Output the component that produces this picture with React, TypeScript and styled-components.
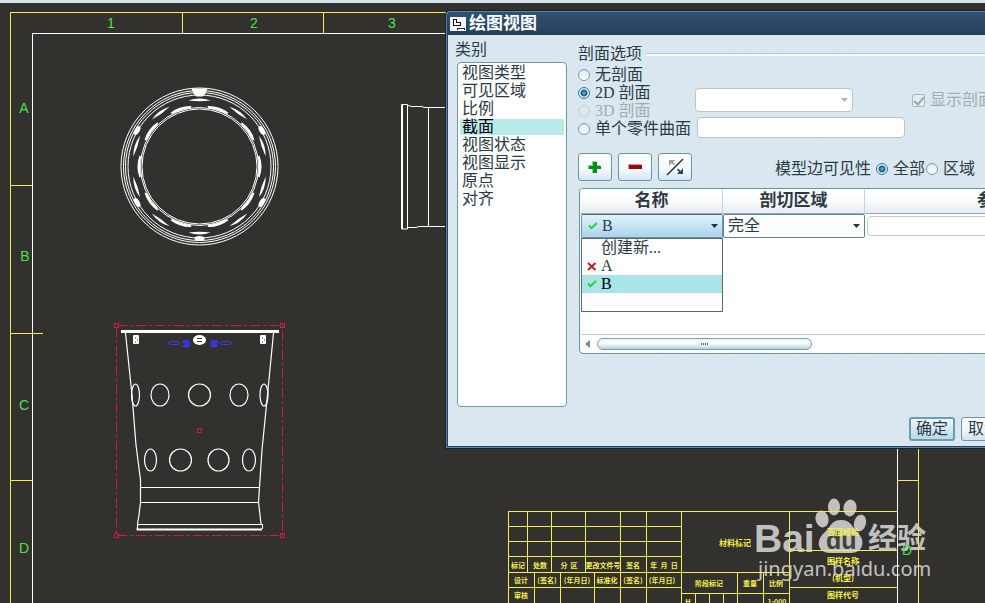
import React from "react";
import styled, { createGlobalStyle, css } from "styled-components";

const GlobalStyle = createGlobalStyle`
  * { box-sizing: border-box; }
  body {
    margin: 0;
    background: #33312d;
    overflow: hidden;
    color: #2c3a44;
    font-family: "Liberation Serif", "Noto Sans CJK SC", serif;
    font-size: 16px;
    line-height: 18px;
  }
  button, input, select { font: inherit; color: inherit; margin: 0; }
`;

/* ---------- Desktop ---------- */

const Desktop = styled.div`
  position: relative;
  min-height: 100vh;
  overflow: hidden;
  background: #33312d;
`;

const TopStrip = styled.div`
  height: 3px;
  background: #d5e2ea;
`;

const Sheet = styled.svg`
  position: absolute;
  inset: 0;
  width: 100%;
  height: 100%;
  fill: none;
`;

const ZoneText = styled.text`
  fill: #4be04b;
  font: 14px "Liberation Sans Narrow", "Liberation Sans", sans-serif;
  text-anchor: middle;
`;

const BlockText = styled.text<{ $size?: number }>`
  fill: #f6f04a;
  font: bold ${(p) => p.$size ?? 7}px "Noto Sans CJK SC", sans-serif;
  text-anchor: middle;
  white-space: pre;
`;

const Watermark = styled.svg`
  position: absolute;
  inset: 0;
  width: 100%;
  height: 100%;
  fill: #e4e4e4;
  opacity: 0.8;
  pointer-events: none;
`;

const Brand = styled.text`
  font: bold 39px "Liberation Sans", sans-serif;
`;
const BrandCjk = styled.text`
  font: bold 29px "Noto Sans CJK SC", sans-serif;
`;
const BrandInner = styled.text`
  font: bold 25px "Liberation Sans", sans-serif;
  fill: #45443f;
`;
const BrandUrl = styled.text`
  font: 20px "Noto Sans", sans-serif;
`;

/* ---------- Dialog ---------- */

const Dialog = styled.section`
  position: absolute;
  top: 10px;
  left: 445px;
  width: 690px;
  border: 1px solid #13202e;
  border-radius: 5px 5px 0 0;
  background: #5f86a8;
  padding: 1px;
`;

const DialogInner = styled.div`
  background: #25405b;
  padding: 0 1px 1px;
  border-radius: 4px 4px 0 0;
`;

const TitleBar = styled.header`
  display: flex;
  align-items: center;
  gap: 3px;
  height: 23px;
  padding-left: 2px;
  color: #fff;
  background: linear-gradient(#2f5070, #263f59);
`;

const DialogTitle = styled.h1`
  margin: 0;
  font-size: 17px;
  line-height: 20px;
  font-weight: bold;
`;

const Body = styled.div`
  display: grid;
  grid-template-columns: 114px 1fr;
  column-gap: 9px;
  padding: 6px 7px 5px;
  background: repeating-linear-gradient(135deg, #d8e6ef 0 3px, #dbe8f0 3px 6px);
`;

const Categories = styled.div`
  display: flex;
  flex-direction: column;
`;

const CategoryList = styled.ul`
  flex: 1;
  min-height: 345px;
  margin: 3px 2px 0;
  padding: 1px 2px;
  list-style: none;
  background: #fff;
  border: 1px solid #6f97a9;
  border-radius: 4px;
`;

const Category = styled.li<{ $active?: boolean }>`
  padding-left: 2px;
  border-radius: 2px;
  ${(p) =>
    p.$active &&
    css`
      color: #000;
      background: #b8eae9;
      background-clip: padding-box;
      border: solid transparent;
      border-width: 1px 0;
      line-height: 16px;
    `}
`;

const Settings = styled.div`
  display: flex;
  flex-direction: column;
  padding-top: 4px;
  min-width: 0;
`;

const Group = styled.fieldset`
  border: 0;
  margin: 0;
  padding: 0;
  min-width: 0;
`;

const Legend = styled.legend`
  display: flex;
  align-items: center;
  gap: 4px;
  width: 100%;
  padding: 0;
  margin-bottom: 3px;
  &::after {
    content: "";
    flex: 1;
    height: 2px;
    border-top: 1px solid #b3c8d3;
    background: #f4fafc;
  }
`;

const Options = styled.div`
  display: grid;
  grid-template-columns: 117px 1fr;
`;

const RadioStack = styled.div`
  display: flex;
  flex-direction: column;
  white-space: nowrap;
`;

const ChoiceLabel = styled.label<{ $dim?: boolean }>`
  display: flex;
  align-items: center;
  gap: 5px;
  white-space: nowrap;
  ${(p) => p.$dim && "color: #a3acb0;"}
`;

const Radio = styled.input`
  appearance: none;
  flex: none;
  width: 12px;
  height: 12px;
  border: 1px solid #7f9aa6;
  border-radius: 50%;
  background: linear-gradient(#d9eaf0, #fff);
  &:checked {
    border-color: #3f7892;
    background: radial-gradient(circle at 50% 50%, #5fa3c0 0 1px, #276a8c 2px 3px, #d8edf5 4px);
  }
  &:disabled {
    border-color: #c0ced4;
    background: #dde8ed;
  }
`;

const Fields = styled.div`
  display: flex;
  flex-direction: column;
  gap: 5px;
  padding-top: 22px;
`;

const FieldRow = styled.div`
  display: flex;
  align-items: center;
  gap: 59px;
`;

const Arrow = styled.svg<{ $dim?: boolean }>`
  flex: none;
  width: 7px;
  height: 4px;
  fill: ${(p) => (p.$dim ? "#a9b4b8" : "#22333c")};
  pointer-events: none;
`;

const SelectBox = styled.div<{ $dim?: boolean; $wide?: boolean }>`
  display: flex;
  align-items: center;
  height: 24px;
  padding: 0 4px;
  width: ${(p) => (p.$wide ? "158px" : "100%")};
  background: #fff;
  border: 1px solid ${(p) => (p.$dim ? "#b8c3c7" : "#5d8796")};
  border-radius: ${(p) => (p.$dim ? 4 : 2)}px;
`;

const Select = styled.select`
  appearance: none;
  flex: 1;
  min-width: 0;
  border: 0;
  padding: 0;
  outline: 0;
  background: transparent;
  opacity: 1;
`;

const TextField = styled.input`
  width: 208px;
  height: 21px;
  margin-left: 2px;
  padding: 0 4px;
  border: 1px solid #b8c3c7;
  border-radius: 4px;
  background: #fff;
`;

const Check = styled.input`
  appearance: none;
  flex: none;
  width: 13px;
  height: 13px;
  border: 1px solid #a9b6bb;
  border-radius: 2px;
  background: #e6eef2;
  display: grid;
  place-items: center;
  &::after {
    content: "";
    width: 4px;
    height: 8px;
    border: solid #9ca7ab;
    border-width: 0 2px 2px 0;
    transform: rotate(40deg);
  }
`;

const Toolbar = styled.div`
  display: flex;
  align-items: center;
  gap: 6px;
  margin-top: 15px;
`;

const ToolButton = styled.button`
  display: grid;
  place-items: center;
  width: 34px;
  height: 28px;
  padding: 0;
  border: 1px solid #6c96a8;
  border-radius: 3px;
  background: linear-gradient(#fff, #f3f9fc 60%, #d3e6ef);
`;

const Visibility = styled.div`
  display: flex;
  align-items: center;
  gap: 1px;
  margin-left: 77px;
  padding-top: 4px;
  white-space: nowrap;
`;

const VisibilityTitle = styled.span`
  margin-right: 4px;
`;

const Grid = styled.div`
  display: flex;
  flex-direction: column;
  height: 166px;
  margin: 7px 0 0 1px;
  padding-left: 1px;
  background: #fff;
  border: 1px solid #6594a4;
  border-radius: 4px;
`;

const Table = styled.table`
  width: 100%;
  table-layout: fixed;
  border-collapse: separate;
  border-spacing: 0;
`;

const HeadCell = styled.th<{ $width?: number }>`
  ${(p) => p.$width && `width: ${p.$width}px;`}
  height: 25px;
  padding: 0;
  font-size: 17px;
  border-right: 1px solid #c6d3da;
  border-bottom: 1px solid #93aab5;
  background: linear-gradient(#fff 30%, #e6edf2);
`;

const Cell = styled.td`
  position: relative;
  height: 24px;
  padding: 0;
`;

const NameButton = styled.button`
  display: flex;
  align-items: center;
  width: 100%;
  height: 24px;
  padding: 0 4px 0 6px;
  gap: 4px;
  text-align: left;
  border: 1px solid #6f93a6;
  border-top-color: #4f6874;
  border-radius: 2px;
  background: linear-gradient(#e2f2fc, #a9d3ee);
`;

const Grow = styled.span`
  flex: 1;
`;

const Popup = styled.ul`
  position: absolute;
  top: 100%;
  left: 0;
  z-index: 1;
  width: 100%;
  height: 74px;
  margin: 0;
  padding: 0;
  list-style: none;
  background: #fff;
  border: 1px solid #5e666c;
`;

const PopupItem = styled.li<{ $active?: boolean }>`
  display: grid;
  grid-template-columns: 11px 1fr;
  column-gap: 3px;
  align-items: center;
  padding-left: 5px;
  ${(p) => p.$active && "background: #a9e4e6; color: #000;"}
`;

const ParamField = styled.input`
  display: block;
  width: calc(100% - 6px);
  height: 20px;
  margin-left: 2px;
  border: 1px solid #c6ccd0;
  border-radius: 4px;
  background: #fff;
`;

const ScrollRow = styled.div`
  display: flex;
  align-items: center;
  gap: 7px;
  height: 19px;
  margin-top: auto;
  padding-left: 4px;
  border-top: 1px solid #bccad1;
`;

const Thumb = styled.div`
  display: grid;
  place-items: center;
  width: 215px;
  height: 12px;
  border: 1px solid #7d9fad;
  border-radius: 6px;
  background: linear-gradient(#e9f3f8, #fff 40%, #b5d0de);
`;

const Footer = styled.footer`
  grid-column: 1 / -1;
  display: flex;
  justify-content: flex-end;
  gap: 6px;
  margin-top: 10px;
  padding-right: 118px;
`;

const FooterButton = styled.button<{ $primary?: boolean }>`
  width: 46px;
  height: 24px;
  padding: 0;
  line-height: 18px;
  border-radius: 3px;
  border: ${(p) => (p.$primary ? "2px solid #6c9caf" : "1px solid #6c96a8")};
  background: ${(p) =>
    p.$primary ? "linear-gradient(#eff8fc, #b4daec)" : "linear-gradient(#fff, #eaf4f9 60%, #cfe3ed)"};
`;

/* ---------- Icons ---------- */

const TickIcon = () => (
  <svg width="10" height="8" viewBox="0 0 10 8" fill="none" stroke="#2fcf3c" strokeWidth="2">
    <path d="M1 3.5 L3.5 6 L9 1" />
  </svg>
);

const CrossIcon = () => (
  <svg width="10" height="9" viewBox="0 0 10 9" fill="none" stroke="#c01a28" strokeWidth="2">
    <path d="M1 1 L8.5 8 M8.5 1 L1 8" />
  </svg>
);

const WindowIcon = () => (
  <svg width="16" height="14" viewBox="0 0 16 14" fill="none" shapeRendering="crispEdges">
    <rect width="16" height="14" fill="#f5f8fa" />
    <path d="M3.5 2.5V8.5H10.5V5.5H6.5V2.5Z" stroke="#111" />
    <path d="M7 12.5V11.5H14V12.5" stroke="#1c2760" />
  </svg>
);

const PlusIcon = () => (
  <svg width="14" height="14" viewBox="0 0 14 14" shapeRendering="crispEdges">
    <path d="M4 1h4v4h4v4H8v4H4V9H0V5h4z" fill="#7fd88a" />
    <path d="M5 2h4v4h4v3H9v4H5V9H1V6h4z" fill="#0c8a1c" />
  </svg>
);

const MinusIcon = () => (
  <svg width="14" height="6" viewBox="0 0 14 6" shapeRendering="crispEdges">
    <path d="M0 0h13v5H0z" fill="#ef9090" />
    <path d="M1 1h13v4H1z" fill="#930b12" />
  </svg>
);

const SwapIcon = () => (
  <svg width="18" height="18" viewBox="0 0 18 18" fill="none">
    <path d="M1 17 L17 1" stroke="#16303f" strokeWidth="1.4" />
    <path d="M3 2h6L7 4l2 2-1 1.500L5.500 5 3 8z" fill="#a39d94" />
    <path d="M17 16h-6l2-2-2-2 1-1.500L14.500 13 17 10z" fill="#2c4350" />
  </svg>
);

const DropArrow = ({ dim }: { dim?: boolean }) => (
  <Arrow $dim={dim} viewBox="0 0 7 4" aria-hidden>
    <path d="M0 0h7L3.500 4z" />
  </Arrow>
);

/* ---------- CAD sheet ---------- */

const steps = (count: number, start: number, step: number) =>
  Array.from({ length: count }, (_, i) => start + i * step);

const RingView = () => (
  <g transform="translate(199.5 166.5)" stroke="#fff">
    {[78.500, 76, 74, 71.500, 59, 57.500].map((r) => (
      <circle key={r} r={r} strokeWidth="1" />
    ))}
    <g fill="#fff" stroke="none">
      {steps(10, 0, 36).map((a) => (
        <path key={a} transform={`rotate(${a})`} d="M-11-66Q0-70 11-66Q0-64.500-11-66Z" />
      ))}
      {steps(10, 18, 36).map((a) => (
        <path key={a} transform={`rotate(${a})`} d="M-11-60Q0-64 11-60L10-58.500Q0-60-10-58.500Z" />
      ))}
      {steps(5, 60, 60).map((a) => (
        <ellipse key={a} transform={`rotate(${a})`} cy="-72" rx="5" ry="2.500" />
      ))}
      <path d="M-8-78H8L6-73 3-70H-3L-6-73Z" />
    </g>
  </g>
);

const holes = [
  [135.5, 395, 4], [160, 395, 9], [199.5, 395, 11], [239, 395, 9], [264, 395, 4],
  [150.5, 460, 6], [180.5, 460, 11], [218.5, 460, 10.5], [249, 460, 6.5],
];

const CupView = () => (
  <g>
    <g stroke="#fff">
      <path d="M121 331.500H279" strokeWidth="3" />
      <path d="M125.500 333L132 395L136 445L140.500 480V502L139 515L137.500 524V529M273.500 333L267 400L262 450L259.500 487L258.500 502L261 524" strokeWidth="1.200" />
      <path d="M141 487.500H260M141 502.500H259M138 524.500H262.500V529" shapeRendering="crispEdges" />
      <path d="M136.500 529.500H262" strokeWidth="2" />
      {holes.map(([cx, cy, rx]) => (
        <ellipse key={`${cx}-${cy}`} cx={cx} cy={cy} rx={rx} ry="11" strokeWidth="1.200" />
      ))}
    </g>
    <g fill="#fff">
      <rect x="133" y="335" width="6" height="9" rx="1" />
      <rect x="260" y="335" width="6" height="9" rx="1" />
      <ellipse cx="199.500" cy="340" rx="6.500" ry="5" />
    </g>
    <g stroke="#33312d" strokeWidth="1">
      <path d="M197 338.500H202M197 341.500H202M135 338h1M137 340h1M135 342h1M262 338h1M264 340h1M262 342h1" />
    </g>
    <g stroke="#3a35ee">
      <path d="M168 343L170.500 341.500H179V344.500H170.500ZM232 343L229.500 341.500H221V344.500H229.500Z" />
      <path d="M182 341H189M183 343H191M184 345H190M182 346.500H189M186.500 339.500V347M211 341H218M210 343H219M211 345H218M211 346.500H217M213.500 340V347" strokeWidth="1.500" />
    </g>
    <g stroke="#c51f3d" shapeRendering="crispEdges">
      <rect x="116.500" y="325.500" width="166" height="210" strokeDasharray="10 3 3 3" />
      <path d="M114.500 323.500h4v4h-4zM280.500 323.500h4v4h-4zM114.500 533.500h4v4h-4zM280.500 533.500h4v4h-4zM197.500 428.500h4v4h-4z" />
    </g>
  </g>
);

const zones: [string, number, number][] = [
  ["1", 111, 28], ["2", 254, 28], ["3", 392, 28], ["A", 24, 113],
  ["B", 25, 261], ["C", 24, 410], ["D", 24, 553], ["D", 907, 555],
];

const blockTexts: [string, number, number, number?][] = [
  ["标记", 518, 568], ["处数", 540, 568], ["分  区", 569, 568], ["更改文件号", 603, 568],
  ["签名", 633, 568], ["年  月  日", 664, 568],
  ["设计", 521, 583], ["(签名)", 547, 583], ["(年月日)", 577, 583], ["标准化", 607, 583],
  ["(签名)", 633, 583], ["(年月日)", 662, 583], ["审核", 521, 598],
  ["材料标记", 735, 546, 8], ["阶段标记", 709, 586], ["重量", 750, 586], ["比例", 776, 586],
  ["百度经验", 843, 535, 8], ["图样名称", 843, 564, 8], ["(机型)", 843, 581, 8],
  ["图样代号", 843, 598, 8], ["H", 688, 605], ["1:000", 777, 605],
];

const DrawingSheet = () => (
  <Sheet role="img" aria-label="工程图">
    <g shapeRendering="crispEdges">
      <path d="M32.500 603V33.500H897.500V603" stroke="#fff" />
      <g stroke="#f4ee55">
        <path d="M10.500 603V12.500H918.500V603" />
        <path d="M182.500 12V33M323.500 12V33M10 185.500H32M10 333.500H43M10 480.500H32M898 480.500H918" />
        <path d="M508.500 603V511.500H897M508 526.500H681M508 541.500H681M508 556.500H681M508 572.500H789M508 587.500H681" />
        <path d="M527.500 511V572M551.500 511V572M585.500 511V572M620.500 511V603M646.500 511V603M681.500 511V603M534.500 572V603M560.500 572V603M594.500 572V603" />
        <path d="M681 593.500H789M695.500 593V603M709.500 593V603M723.500 593V603M737.500 572V603M763.500 572V603M789.500 511V603M789 550.500H897M789 587.500H897" />
      </g>
      <path d="M402.500 104V229M428.500 108V226" stroke="#fff" />
    </g>
    <g stroke="#fff">
      <path d="M401.500 104.500H407.500V229H401.500ZM407.500 105.500L412 106.500H422L424 107.500H445M407.500 227.500H416L419 226.500H445" />
    </g>
    <RingView />
    <CupView />
    {zones.map(([t, x, y]) => (
      <ZoneText key={`${t}${x}${y}`} x={x} y={y}>{t}</ZoneText>
    ))}
    {blockTexts.map(([t, x, y, size]) => (
      <BlockText key={`${t}${x}${y}`} x={x} y={y} $size={size}>{t}</BlockText>
    ))}
  </Sheet>
);

const BaiduMark = () => (
  <Watermark aria-label="Baidu 经验">
    <Brand x="754" y="552">Bai</Brand>
    <ellipse cx="822" cy="519" rx="6.500" ry="8.500" transform="rotate(-12 822 519)" />
    <ellipse cx="834" cy="507" rx="6" ry="8.500" />
    <ellipse cx="850" cy="508" rx="6.500" ry="8.500" transform="rotate(10 850 508)" />
    <ellipse cx="860" cy="523" rx="6" ry="8.500" transform="rotate(15 860 523)" />
    <path d="M841 520C851 520 853 528 858 533C866 541 863 553 851 553H830C818 553 815 541 824 533C830 528 831 520 841 520Z" />
    <BrandInner x="826" y="549">du</BrandInner>
    <BrandCjk x="868" y="549">经验</BrandCjk>
    <BrandUrl x="758" y="576">jingyan.baidu.com</BrandUrl>
  </Watermark>
);

/* ---------- App ---------- */

const categories = ["视图类型", "可见区域", "比例", "截面", "视图状态", "视图显示", "原点", "对齐"];

const sectionModes = [
  { label: "无剖面" },
  { label: "2D 剖面", checked: true },
  { label: "3D 剖面", disabled: true },
  { label: "单个零件曲面" },
];

export default function App() {
  return (
    <Desktop>
      <GlobalStyle />
      <TopStrip />
      <BaiduMark />
      <DrawingSheet />
      <Dialog role="dialog" aria-labelledby="dialog-title">
        <DialogInner>
          <TitleBar>
            <WindowIcon />
            <DialogTitle id="dialog-title">绘图视图</DialogTitle>
          </TitleBar>
          <Body>
            <Categories>
              <span id="category-label">类别</span>
              <CategoryList role="listbox" aria-labelledby="category-label">
                {categories.map((c) => (
                  <Category key={c} role="option" aria-selected={c === "截面"} $active={c === "截面"}>
                    {c}
                  </Category>
                ))}
              </CategoryList>
            </Categories>

            <Settings>
              <Group>
                <Legend>剖面选项</Legend>
                <Options>
                  <RadioStack>
                    {sectionModes.map((m) => (
                      <ChoiceLabel key={m.label} $dim={m.disabled}>
                        <Radio type="radio" name="section" defaultChecked={m.checked} disabled={m.disabled} />
                        {m.label}
                      </ChoiceLabel>
                    ))}
                  </RadioStack>
                  <Fields>
                    <FieldRow>
                      <SelectBox $dim $wide>
                        <Select disabled aria-label="3D 剖面" />
                        <DropArrow dim />
                      </SelectBox>
                      <ChoiceLabel $dim>
                        <Check type="checkbox" defaultChecked disabled />
                        显示剖面线
                      </ChoiceLabel>
                    </FieldRow>
                    <TextField type="text" aria-label="单个零件曲面" />
                  </Fields>
                </Options>
              </Group>

              <Toolbar>
                <ToolButton type="button" aria-label="添加"><PlusIcon /></ToolButton>
                <ToolButton type="button" aria-label="移除"><MinusIcon /></ToolButton>
                <ToolButton type="button" aria-label="反向"><SwapIcon /></ToolButton>
                <Visibility role="radiogroup" aria-labelledby="edge-label">
                  <VisibilityTitle id="edge-label">模型边可见性</VisibilityTitle>
                  <ChoiceLabel><Radio type="radio" name="edges" defaultChecked />全部</ChoiceLabel>
                  <ChoiceLabel><Radio type="radio" name="edges" />区域</ChoiceLabel>
                </Visibility>
              </Toolbar>

              <Grid>
                <Table>
                  <thead>
                    <tr>
                      <HeadCell $width={142}>名称</HeadCell>
                      <HeadCell $width={142}>剖切区域</HeadCell>
                      <HeadCell>参考</HeadCell>
                    </tr>
                  </thead>
                  <tbody>
                    <tr>
                      <Cell>
                        <NameButton type="button" aria-haspopup="listbox" aria-expanded="true">
                          <TickIcon />
                          <Grow>B</Grow>
                          <DropArrow />
                        </NameButton>
                        <Popup role="listbox" aria-label="名称">
                          <PopupItem role="option"><span />创建新...</PopupItem>
                          <PopupItem role="option"><CrossIcon />A</PopupItem>
                          <PopupItem role="option" aria-selected $active><TickIcon />B</PopupItem>
                        </Popup>
                      </Cell>
                      <Cell>
                        <SelectBox>
                          <Select aria-label="剖切区域" defaultValue="完全">
                            <option>完全</option>
                          </Select>
                          <DropArrow />
                        </SelectBox>
                      </Cell>
                      <Cell><ParamField type="text" aria-label="参考" /></Cell>
                    </tr>
                  </tbody>
                </Table>
                <ScrollRow>
                  <svg width="5" height="8" viewBox="0 0 5 8" fill="#6f8f9e" aria-hidden><path d="M5 0v8L0 4z" /></svg>
                  <Thumb>
                    <svg width="8" height="2" viewBox="0 0 8 2" fill="#4f6c7a" aria-hidden>
                      <path d="M0 0h1v2H0zM2 0h1v2H2zM4 0h1v2H4zM6 0h1v2H6z" />
                    </svg>
                  </Thumb>
                </ScrollRow>
              </Grid>
            </Settings>

            <Footer>
              <FooterButton type="button" $primary>确定</FooterButton>
              <FooterButton type="button">取消</FooterButton>
            </Footer>
          </Body>
        </DialogInner>
      </Dialog>
    </Desktop>
  );
}
